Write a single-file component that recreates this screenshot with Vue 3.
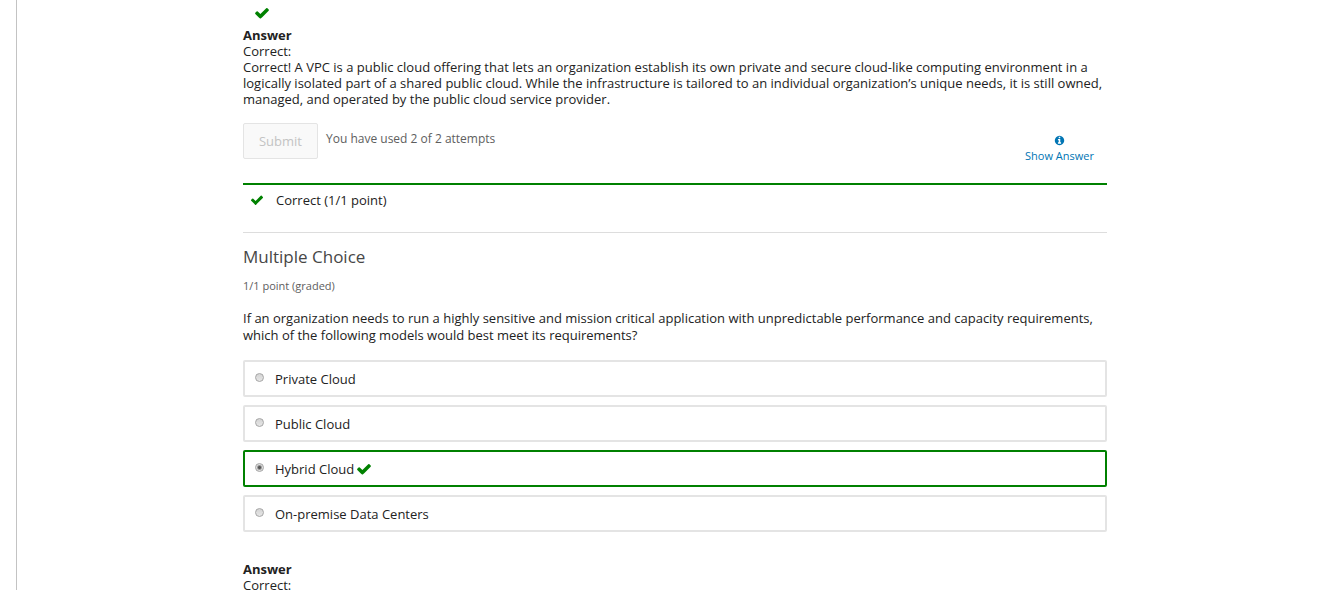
<script setup>
import { ref } from 'vue'

const checkPath =
  'M1671 566q0 40-28 68l-724 724-136 136q-28 28-68 28t-68-28l-136-136-362-362q-28-28-28-68t28-68l136-136q28-28 68-28t68 28l294 295 656-657q28-28 68-28t68 28l136 136q28 28 28 68z'
const infoPath =
  'M1152 1376v-160q0-14-9-23t-23-9h-96v-512q0-14-9-23t-23-9h-320q-14 0-23 9t-9 23v160q0 14 9 23t23 9h96v320h-96q-14 0-23 9t-9 23v160q0 14 9 23t23 9h448q14 0 23-9t9-23zm-128-896v-160q0-14-9-23t-23-9h-192q-14 0-23 9t-9 23v160q0 14 9 23t23 9h192q14 0 23-9t9-23zm640 416q0 209-103 385.5t-279.5 279.5-385.5 103-385.5-103-279.5-279.5-103-385.5 103-385.5 279.5-279.5 385.5-103 385.5 103 279.5 279.5 103 385.5z'

const choices = ['Private Cloud', 'Public Cloud', 'Hybrid Cloud', 'On-premise Data Centers']
const correct = 'Hybrid Cloud'
const selected = ref('Hybrid Cloud')
</script>

<template>
  <main class="content">
    <section class="problem">
      <div class="status">
        <svg class="check" viewBox="0 0 1792 1792" aria-hidden="true"><path :d="checkPath" /></svg>
      </div>
      <div class="explanation">
        <strong>Answer</strong>
        <p>Correct:</p>
        <p>
          Correct! A VPC is a public cloud offering that lets an organization establish its own private and secure
          cloud-like computing environment in a logically isolated part of a shared public cloud. While the
          infrastructure is tailored to an individual organization’s unique needs, it is still owned, managed, and
          operated by the public cloud service provider.
        </p>
      </div>
      <div class="action">
        <button class="submit" type="button" disabled>Submit</button>
        <span class="attempts">You have used 2 of 2 attempts</span>
        <button class="show" type="button">
          <svg viewBox="0 0 1792 1792" aria-hidden="true"><path :d="infoPath" /></svg>
          <span>Show Answer</span>
        </button>
      </div>
      <div class="notification">
        <svg class="check small" viewBox="0 0 1792 1792" aria-hidden="true"><path :d="checkPath" /></svg>
        <span>Correct (1/1 point)</span>
      </div>
    </section>

    <section class="problem next">
      <h3>Multiple Choice</h3>
      <div class="progress">1/1 point (graded)</div>
      <fieldset>
        <legend>
          If an organization needs to run a highly sensitive and mission critical application with unpredictable
          performance and capacity requirements, which of the following models would best meet its requirements?
        </legend>
        <div class="choices">
          <label
            v-for="choice in choices"
            :key="choice"
            class="choice"
            :class="{ correct: choice === correct && selected === choice }"
          >
            <input v-model="selected" type="radio" name="cloud-model" :value="choice" />
            <span>{{ choice }}</span>
            <svg
              v-if="choice === correct && selected === choice"
              class="check"
              viewBox="0 0 1792 1792"
              aria-hidden="true"
            ><path :d="checkPath" /></svg>
          </label>
        </div>
      </fieldset>
      <div class="explanation">
        <strong>Answer</strong>
        <p>Correct:</p>
      </div>
    </section>
  </main>
</template>

<style>
body {
  background: #fff;
  overflow: hidden;
}
</style>

<style scoped>
.content {
  margin-left: 16px;
  padding: 0 213px 0 226px;
  border-left: 1px solid #c3c3c3;
  color: #222;
  font: 13px/16px 'Open Sans', sans-serif;
}

svg {
  display: block;
  flex: none;
}

.check {
  width: 16px;
  height: 16px;
  fill: #008100;
}

.check.small {
  width: 14px;
  height: 14px;
}

.status {
  padding: 5px 11px 6px;
}

.explanation strong {
  display: block;
  font-weight: 700;
}

.explanation p {
  margin: 0;
}

.action {
  display: flex;
  align-items: flex-start;
  margin-top: 16px;
  height: 60px;
}

button {
  margin: 0;
  font-family: inherit;
}

.submit {
  width: 75px;
  height: 36px;
  padding: 0;
  border: 1px solid #e4e4e4;
  border-radius: 2px;
  background: #f9f9f9;
  color: #c3c3c3;
  font-size: 13px;
}

.attempts {
  margin: 8px 0 0 8px;
  color: #5e5e5e;
  font-size: 12px;
}

.show {
  display: flex;
  flex-direction: column;
  align-items: center;
  margin: 12px 13px 0 auto;
  padding: 0;
  border: 0;
  background: none;
  color: #0075b4;
  font-size: 11px;
  line-height: 16px;
  cursor: pointer;
}

.show svg {
  width: 11px;
  height: 11px;
  margin-bottom: 2px;
  fill: currentColor;
}

.notification {
  display: flex;
  align-items: center;
  gap: 12px;
  padding: 7px 7px 24px;
  border-top: 2px solid #008100;
}

.next {
  border-top: 1px solid #ddd;
  padding-top: 12px;
}

h3 {
  margin: 0;
  color: #474747;
  font-size: 17px;
  font-weight: 400;
  line-height: 24px;
}

.progress {
  margin-top: 9px;
  color: #5e5e5e;
  font-size: 11px;
}

fieldset {
  min-width: 0;
  margin: 16px 0 0;
  padding: 0;
  border: 0;
}

legend {
  padding: 0;
  line-height: 17px;
}

.choices {
  display: grid;
  gap: 8px;
  margin-top: 16px;
}

.choice {
  display: flex;
  align-items: center;
  box-sizing: border-box;
  height: 37px;
  padding: 0 10px;
  border: 2px solid #e4e4e4;
  border-radius: 2px;
}

.choice.correct {
  border-color: #008100;
}

.choice input {
  appearance: none;
  box-sizing: border-box;
  width: 9px;
  height: 9px;
  margin: 0 11px 2px 0;
  border: 1px solid #a5a5a5;
  border-radius: 50%;
  background: linear-gradient(#d4d4d4, #e6e6e6);
}

.choice input:checked {
  background: radial-gradient(circle, #555 0 1px, #e0e0e0 3px);
}

.choice .check {
  margin-left: 2px;
}

.next .explanation {
  margin-top: 29px;
}
</style>
